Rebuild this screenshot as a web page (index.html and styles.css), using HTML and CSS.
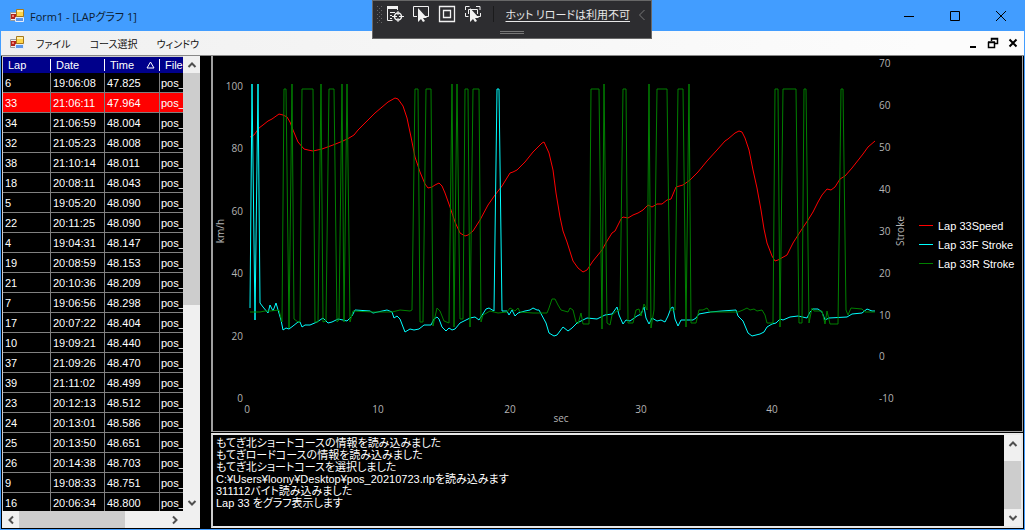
FILE: index.html
```html
<!DOCTYPE html>
<html lang="ja">
<head>
    <meta charset="UTF-8">
    <title>Form1 - [LAPグラフ 1]</title>
    <link rel="stylesheet" href="styles.css">
</head>
<body>
<svg width="0" height="0" class="defs">
    <symbol id="form" viewBox="0 0 16 16">
        <path d="M1.500 4.500h6v8h-6z" fill="#eee" stroke="#999"/>
        <path d="M2 6h5v5H2z" fill="#b3241c"/>
        <path d="M3 7h2v2H3z" fill="#f08070"/>
        <path d="M7.500 1.500h7v7h-7z" fill="#ffd54a" stroke="#a8791a"/>
        <path d="M8 2h6v2H8z" fill="#fff0a8"/>
        <path d="M6.500 9.500h8v4h-8z" fill="#5a96ea" stroke="#e4ecfa"/>
    </symbol>
    <symbol id="arrow" viewBox="0 0 10 10">
        <path d="M1.500 7L5 3.500 8.500 7" fill="none" stroke="#505050" stroke-width="2"/>
    </symbol>
</svg>

<header class="title">
    <svg class="icon"><use href="#form"/></svg>
    <h1>Form1 - [LAPグラフ 1]</h1>
    <button aria-label="最小化"><svg viewBox="0 0 12 12"><path d="M1 6.500h10"/></svg></button>
    <button aria-label="最大化"><svg viewBox="0 0 12 12"><path d="M1.500 1.500h9v9h-9z"/></svg></button>
    <button aria-label="閉じる"><svg viewBox="0 0 12 12"><path d="M1 1l10 10M11 1L1 11"/></svg></button>
</header>

<nav class="menu">
    <svg class="icon"><use href="#form"/></svg>
    <button class="file">ファイル</button>
    <button class="course">コース選択</button>
    <button class="win">ウィンドウ</button>
    <div class="child">
        <button aria-label="子を最小化"><svg viewBox="0 0 12 12"><path d="M3 10h6" stroke-width="2"/></svg></button>
        <button aria-label="子を元に戻す"><svg viewBox="0 0 12 12"><path d="M1.500 5.500h6v5h-6zM1 5h7M4.500 4V1.500h6v5H8M4 2h7"/></svg></button>
        <button aria-label="子を閉じる"><svg viewBox="0 0 12 12"><path d="M2.500 2.500l7 7M9.500 2.500l-7 7" stroke-width="2"/></svg></button>
    </div>
</nav>

<div class="debug">
    <svg class="tools" viewBox="0 0 130 30">
        <path d="M4.500 6v18M8.500 6v18" stroke="#666" stroke-dasharray="1 3"/>
        <path d="M6.500 8v16" stroke="#666" stroke-dasharray="1 3"/>
        <g fill="none" stroke="#f1f1f1">
            <path d="M14 7.500h11" stroke-width="3"/>
            <path d="M14.500 8v12.500h5M24.500 8v2M17 12.500h5M17 15.500h2M17 18.500h2"/>
            <circle cx="25" cy="16.500" r="3.500" stroke-width="1.500"/>
            <path d="M25 11v4M25 18v4M19 16.500h5M26 16.500h5"/>
            <path d="M44 16.500h-3.500v-10h15v10H51"/>
            <path d="M66.500 6.500h15v15h-15zM70.500 10.500h7v7h-7z" stroke-width="1.300"/>
            <path d="M92.500 10V6.500h4M103 6.500h4V10M92.500 13v3.500h3M107.500 13v3.500H104M95.500 14V9.500h9V14"/>
        </g>
        <path d="M45 8v14l3-3 2 3 2-1-2-3h4zM97 8v14l3-3 2 3 2-1-2-3h4z" fill="#f1f1f1"/>
        <path d="M120.500 6v16" stroke="#1b1b1c"/>
    </svg>
    <a href="#">ホット リロードは利用不可</a>
    <button aria-label="折りたたむ"><svg viewBox="0 0 8 12"><path d="M6.500 1L1.500 6l5 5"/></svg></button>
    <span class="grip"></span>
</div>

<main>
    <section class="list">
        <div class="grid">
            <table>
                <colgroup><col class="c1"><col class="c2"><col class="c3"><col class="c4"></colgroup>
                <thead>
                <tr><th>Lap</th><th>Date</th><th>Time<svg viewBox="0 0 9 8"><path d="M4.500 1L8 7H1z"/></svg></th><th>File</th></tr>
                </thead>
                <tbody>
                <tr><td>6</td><td>19:06:08</td><td>47.825</td><td>pos_</td></tr>
                <tr class="on"><td>33</td><td>21:06:11</td><td>47.964</td><td>pos_</td></tr>
                <tr><td>34</td><td>21:06:59</td><td>48.004</td><td>pos_</td></tr>
                <tr><td>32</td><td>21:05:23</td><td>48.008</td><td>pos_</td></tr>
                <tr><td>38</td><td>21:10:14</td><td>48.011</td><td>pos_</td></tr>
                <tr><td>18</td><td>20:08:11</td><td>48.043</td><td>pos_</td></tr>
                <tr><td>5</td><td>19:05:20</td><td>48.090</td><td>pos_</td></tr>
                <tr><td>22</td><td>20:11:25</td><td>48.090</td><td>pos_</td></tr>
                <tr><td>4</td><td>19:04:31</td><td>48.147</td><td>pos_</td></tr>
                <tr><td>19</td><td>20:08:59</td><td>48.153</td><td>pos_</td></tr>
                <tr><td>21</td><td>20:10:36</td><td>48.209</td><td>pos_</td></tr>
                <tr><td>7</td><td>19:06:56</td><td>48.298</td><td>pos_</td></tr>
                <tr><td>17</td><td>20:07:22</td><td>48.404</td><td>pos_</td></tr>
                <tr><td>10</td><td>19:09:21</td><td>48.440</td><td>pos_</td></tr>
                <tr><td>37</td><td>21:09:26</td><td>48.470</td><td>pos_</td></tr>
                <tr><td>39</td><td>21:11:02</td><td>48.499</td><td>pos_</td></tr>
                <tr><td>23</td><td>20:12:13</td><td>48.512</td><td>pos_</td></tr>
                <tr><td>24</td><td>20:13:01</td><td>48.586</td><td>pos_</td></tr>
                <tr><td>25</td><td>20:13:50</td><td>48.651</td><td>pos_</td></tr>
                <tr><td>26</td><td>20:14:38</td><td>48.703</td><td>pos_</td></tr>
                <tr><td>9</td><td>19:08:33</td><td>48.751</td><td>pos_</td></tr>
                <tr><td>16</td><td>20:06:34</td><td>48.800</td><td>pos_</td></tr>
                </tbody>
            </table>
        </div>
        <div class="bar v">
            <button aria-label="上へ"><svg><use href="#arrow"/></svg></button>
            <i class="thumb"></i>
            <button aria-label="下へ"><svg class="down"><use href="#arrow"/></svg></button>
        </div>
        <div class="bar h">
            <button aria-label="左へ"><svg class="left"><use href="#arrow"/></svg></button>
            <i class="thumb"></i>
            <button aria-label="右へ"><svg class="right"><use href="#arrow"/></svg></button>
        </div>
    </section>

    <div class="side">
        <section class="chart">
            <svg class="plot" viewBox="213 56 701 375">
                <g class="ticks end">
                    <text x="243" y="90">100</text>
                    <text x="243" y="152">80</text>
                    <text x="243" y="215">60</text>
                    <text x="243" y="277">40</text>
                    <text x="243" y="340">20</text>
                    <text x="243" y="402">0</text>
                </g>
                <g class="ticks">
                    <text x="879" y="67">70</text>
                    <text x="879" y="109">60</text>
                    <text x="879" y="151">50</text>
                    <text x="879" y="193">40</text>
                    <text x="879" y="235">30</text>
                    <text x="879" y="277">20</text>
                    <text x="879" y="319">10</text>
                    <text x="879" y="360">0</text>
                    <text x="879" y="402">-10</text>
                </g>
                <g class="ticks mid">
                    <text x="247" y="413">0</text>
                    <text x="378" y="413">10</text>
                    <text x="510" y="413">20</text>
                    <text x="641" y="413">30</text>
                    <text x="772" y="413">40</text>
                    <text x="561" y="422">sec</text>
                    <text transform="translate(224 231) rotate(-90)">km/h</text>
                    <text transform="translate(904 231) rotate(-90)">Stroke</text>
                </g>
                <polyline class="speed" points="250,137 254,135 259,128 263,125 268,121 272,119 279,114 283,115 287,117 290,122 293,130 298,142 304,149 308,150 313,151 322,149 333,145 343,141 349,138 354,135 358,130 375,113 388,102 395,98 398,99 403,106 407,118 411,137 415,157 420,172 425,184 428,188 432,187 435,185 439,183 442,186 445,193 450,207 455,222 460,233 465,236 468,235 473,231 480,220 488,205 495,195 502,186 510,173 513,172 517,170 525,162 533,152 542,143 544,142 549,153 553,170 556,193 560,217 563,231 567,242 573,261 578,268 583,272 587,270 593,261 602,250 607,241 612,233 615,231 621,219 623,217 628,218 633,215 638,213 643,210 648,205 652,207 657,204 662,204 667,200 671,199 676,187 683,185 690,180 698,172 707,161 717,150 725,141 728,139 735,133 739,131 742,132 745,138 749,150 753,170 757,188 761,210 764,229 767,243 772,256 775,261 778,260 787,255 793,243 800,232 808,220 813,212 818,202 822,195 827,189 831,190 835,187 840,179 845,176 852,168 863,154 868,147 875,141"/>
                <polyline class="front" points="250,308 252,84 255,320 258,84 260,303 263,307 268,313 270,305 273,311 276,303 281,320 283,330 286,328 289,329 293,326 298,322 300,322 302,327 305,325 310,325 317,322 323,318 328,323 332,322 338,319 343,320 347,321 352,316 355,310 370,311 373,313 387,310 392,312 394,318 397,316 400,319 405,332 410,329 414,330 419,329 424,325 431,325 434,319 437,317 439,319 442,327 446,331 449,328 452,330 455,329 460,323 470,318 475,317 479,320 486,309 489,308 494,311 497,89 499,89 502,311 507,311 509,315 512,310 515,316 518,313 525,311 530,310 533,308 537,310 539,310 546,323 549,333 554,336 557,335 563,327 568,331 572,328 577,323 587,318 597,319 605,315 612,314 617,307 619,315 623,324 626,320 630,321 637,316 641,314 644,307 646,318 649,324 652,318 657,321 661,320 665,322 668,316 671,308 673,307 675,319 678,326 681,320 693,320 696,318 699,314 710,312 722,311 736,310 738,316 743,321 748,333 752,336 760,334 764,332 767,327 772,324 776,323 780,319 783,320 790,317 798,316 807,318 810,312 813,309 818,309 822,312 825,320 829,318 847,317 852,314 862,313 867,309 872,311 875,311"/>
                <polyline class="rear" points="250,312 260,312 265,311 270,311 279,310 282,322 284,89 286,89 289,328 292,84 294,319 298,322 300,322 302,89 313,89 315,322 318,322 321,84 323,322 326,321 329,89 334,89 337,322 339,320 342,84 344,322 347,84 350,322 353,311 373,312 392,312 400,310 410,311 412,310 415,89 418,89 420,322 423,322 426,89 431,89 433,326 437,308 440,311 444,321 449,323 452,84 454,327 457,84 460,319 463,319 465,89 468,89 470,327 473,89 479,89 481,322 483,315 490,311 498,313 507,312 510,308 515,311 518,308 520,312 533,313 547,313 549,308 552,299 555,299 558,305 561,310 568,312 570,308 573,310 576,322 578,324 581,313 583,324 589,324 591,89 599,89 602,329 604,84 607,323 610,325 612,315 618,310 620,310 623,89 626,89 628,323 633,323 636,310 639,309 641,316 644,304 647,310 649,84 651,328 654,310 657,89 667,89 670,310 675,310 678,89 683,89 686,327 689,84 691,323 696,323 699,310 703,310 707,308 710,312 738,312 743,310 747,308 750,310 754,309 757,311 762,310 765,315 767,323 773,323 775,89 778,89 780,327 783,89 796,89 799,323 802,323 804,89 806,89 809,323 812,308 814,311 822,311 825,324 827,311 830,324 838,324 841,89 843,89 846,310 848,315 851,308 862,309 865,312 875,312"/>
            </svg>
            <ul class="legend">
                <li class="speed">Lap 33Speed</li>
                <li class="front">Lap 33F Stroke</li>
                <li class="rear">Lap 33R Stroke</li>
            </ul>
        </section>
        <section class="log">
<textarea readonly aria-label="ログ">
もてぎ北ショートコースの情報を読み込みました
もてぎロードコースの情報を読み込みました
もてぎ北ショートコースを選択しました
C:¥Users¥loony¥Desktop¥pos_20210723.rlpを読み込みます
311112バイト読み込みました
Lap 33 をグラフ表示します</textarea>
            <div class="bar v">
                <button aria-label="ログを上へ"><svg><use href="#arrow"/></svg></button>
                <i class="thumb"></i>
                <button aria-label="ログを下へ"><svg class="down"><use href="#arrow"/></svg></button>
            </div>
        </section>
    </div>
</main>
</body>
</html>
```
FILE: styles.css
```css
*{box-sizing:border-box;}
body{margin:0;height:100vh;display:flex;flex-direction:column;overflow:hidden;background:#429dff;border:solid #429dff;border-width:0 1px 1px;font-family:"Liberation Sans","Noto Sans CJK JP",sans-serif;font-size:11px;font-feature-settings:"palt";}
button{border:0;padding:0;margin:0;background:none;font:inherit;font-feature-settings:inherit;color:inherit;}
button svg{display:block;margin:auto;}
.defs{position:absolute;}
.icon{width:16px;height:16px;flex:none;}

/* title */
.title{flex:none;height:31px;display:flex;align-items:center;padding-left:8px;}
.title h1{flex:1;margin:0 0 0 5px;font:11px "Open Sans","Noto Sans CJK JP",sans-serif;font-feature-settings:"palt";color:#0d1c30;}
.title button{width:46px;height:31px;}
.title button svg{width:12px;height:12px;fill:none;stroke:#000;}

/* menu */
.menu{flex:none;height:24px;display:flex;align-items:center;padding-left:8px;background:linear-gradient(90deg,#f0f0f0,#fcfcfc 90%);font:10px "Noto Sans CJK JP",sans-serif;font-feature-settings:"palt";color:#111;}
.menu .file{margin-left:11px;}
.menu .course,.menu .win{margin-left:19px;}
.child{margin-left:auto;display:flex;gap:8px;padding-right:5px;}
.child svg{width:12px;height:12px;fill:none;stroke:#000;stroke-width:1.5;}

/* hot reload bar, floats over the window */
.debug{position:absolute;left:50%;top:0;margin-left:-141px;width:280px;height:39px;display:flex;align-items:flex-start;background:#2d2d30;border:1px solid #686868;color:#e8e8e8;}
.debug .tools{width:130px;height:30px;flex:none;margin-top:-1px;}
.debug a{color:inherit;font:11px/16px "Noto Sans CJK JP",sans-serif;font-feature-settings:"palt";white-space:nowrap;margin:5px 0 0 3px;text-underline-offset:2px;}
.debug button{margin:8px 5px 0 auto;}
.debug button svg{width:8px;height:12px;fill:none;stroke:#777;}
.grip{position:absolute;left:127px;bottom:4px;width:24px;height:3px;border:solid #777;border-width:1px 0;}

main{flex:1;min-height:0;display:flex;gap:11px;padding:0 1px 1px;background:#000;border-top:1px solid #888;}

/* lap list */
.list{width:198px;flex:none;display:grid;grid-template-columns:1fr 17px;grid-template-rows:1fr 17px;background:#f0f0f0;}
.grid{overflow:hidden;min-width:0;min-height:0;background:#000;border:solid #ccc;border-width:1px 0 0 1px;color:#fff;}
table{table-layout:fixed;width:220px;border-collapse:separate;border-spacing:0;}
.c1{width:48px;}
.c2{width:54px;}
.c3{width:55px;}
th,td{padding:0 0 0 2px;text-align:left;font-weight:normal;white-space:nowrap;}
th{height:16px;background:#00008b;line-height:16px;padding-left:5px;background-image:linear-gradient(#fff,#fff);background-repeat:no-repeat;background-size:1px 12px;background-position:100% 2px;}
th svg{float:right;width:9px;height:8px;margin:4px 5px 0 0;fill:none;stroke:#fff;}
td{height:20px;padding-top:1px;line-height:18px;border:solid #808080;border-width:0 1px 1px 0;}
td:last-child{padding-left:1px;}
.on td{background:#f00;}

/* scroll bars */
.bar{display:flex;background:#f0f0f0;}
.bar button{width:17px;height:17px;flex:none;}
.bar button svg{width:10px;height:10px;}
.bar button:last-child{margin-left:auto;}
.v{flex-direction:column;width:17px;flex:none;}
.v button:last-child{margin:auto 0 0;}
.thumb{background:#cdcdcd;}
.v .thumb{height:51%;}
.h .thumb{width:106px;}
.down{transform:rotate(180deg);}
.left{transform:rotate(-90deg);}
.right{transform:rotate(90deg);}

.side{flex:1;min-width:0;display:flex;flex-direction:column;gap:1px;}

/* chart */
.chart{flex:1;min-height:0;display:flex;align-items:flex-start;border:solid #a0a0a0;border-width:0 1px 1px 2px;}
.plot{flex:1;min-width:0;height:100%;display:block;}
.ticks{fill:#b4b4b4;font:10px "Open Sans",sans-serif;}
.end{text-anchor:end;}
.mid{text-anchor:middle;}
polyline{fill:none;stroke:currentColor;}
.speed{color:#f00;}
.front{color:#0ff;}
.rear{color:#008000;}
.legend{width:108px;flex:none;margin:160px 0 0;padding:0;list-style:none;}
.legend li{display:flex;align-items:center;gap:5px;height:19px;white-space:nowrap;-webkit-text-fill-color:#fff;}
.legend li::before{content:"";width:14px;height:1px;margin-left:5px;background:currentColor;}

/* log */
.log{height:95px;flex:none;display:flex;border:2px solid #e8e8e8;border-left-color:#ccc;}
.log textarea{flex:1;min-width:0;border:0;margin:0;padding:2px 3px;resize:none;overflow:hidden;outline:0;background:#000;color:#fff;font:11px/12px "Liberation Sans","Noto Sans CJK JP",sans-serif;font-feature-settings:"palt";}
.log .thumb{height:52px;margin-top:9px;}
```
